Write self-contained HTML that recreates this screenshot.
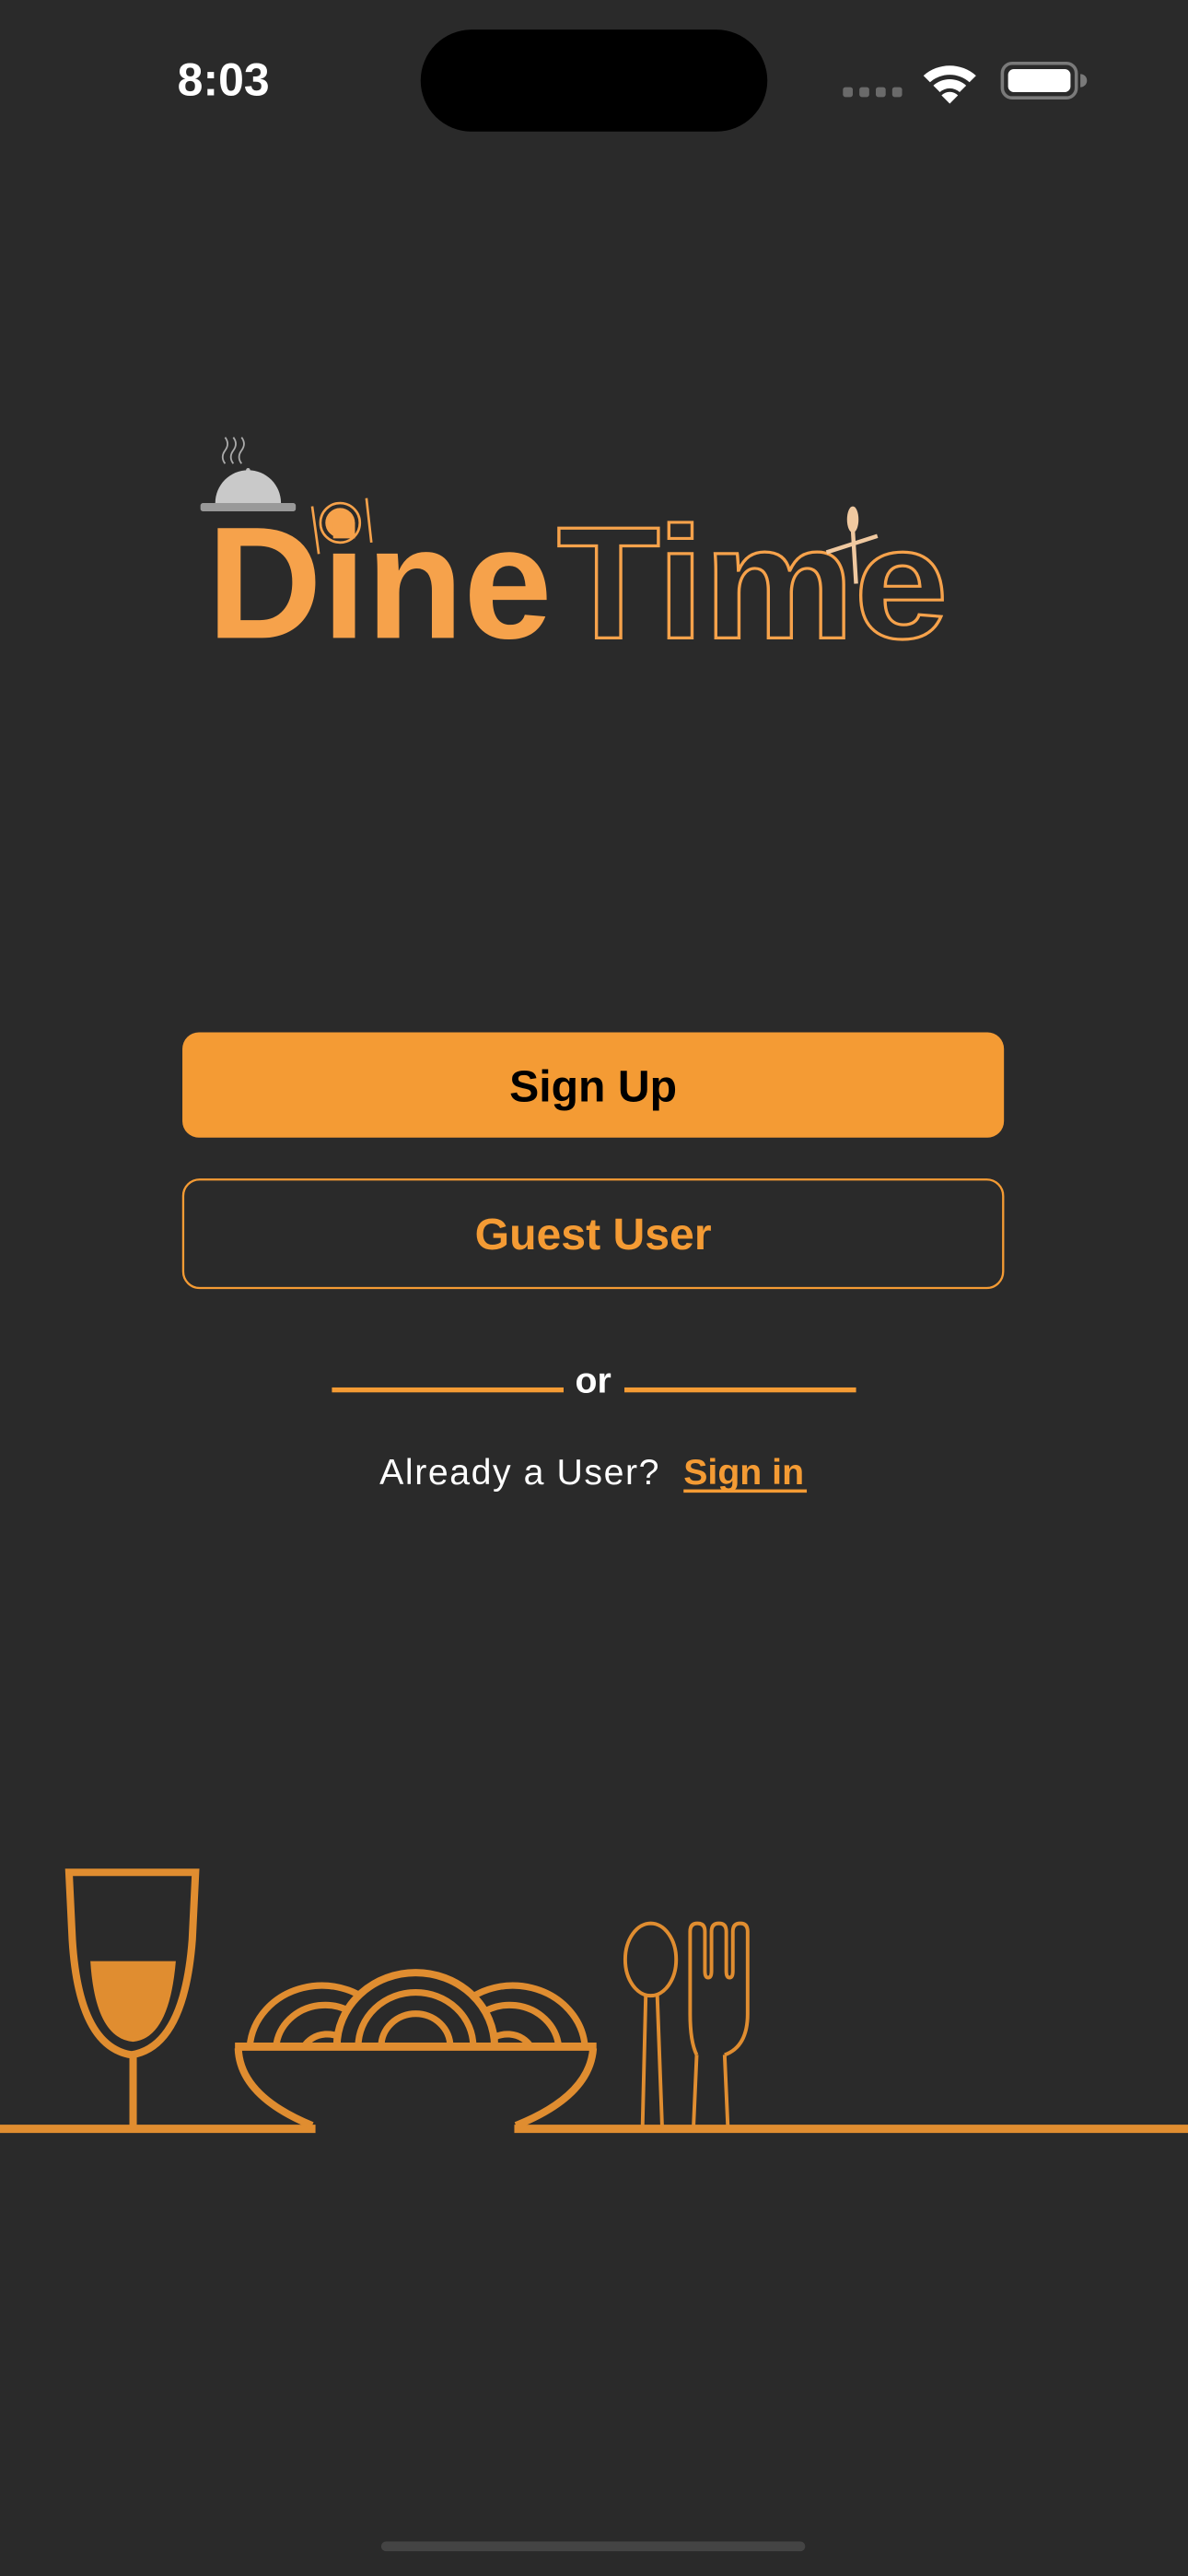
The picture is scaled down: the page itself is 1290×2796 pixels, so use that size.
<!DOCTYPE html>
<html><head><meta charset="utf-8"><style>
html,body{margin:0;padding:0;background:#2a2a2a;}
svg{display:block;}
</style></head><body>
<svg width="1290" height="2796" viewBox="0 0 723 1567" xmlns="http://www.w3.org/2000/svg" font-family="'Liberation Sans', sans-serif">
<rect width="723" height="1567" fill="#2a2a2a"/>
<!-- status bar -->
<text x="136" y="58" text-anchor="middle" font-size="28" font-weight="bold" fill="#fff">8:03</text>
<rect x="256" y="18" width="211" height="62" rx="31" fill="#000"/>
<g fill="#6a6a6a">
<rect x="513" y="53" width="6" height="6" rx="1.5"/><rect x="523" y="53" width="6" height="6" rx="1.5"/>
<rect x="533" y="53" width="6" height="6" rx="1.5"/><rect x="543" y="53" width="6" height="6" rx="1.5"/>
</g>
<g fill="#fff">
<path d="M562 46 A24 24 0 0 1 594 46 L590 50 A18 18 0 0 0 566 50 Z"/>
<path d="M568 52 A15 15 0 0 1 588 52 L584 56 A9 9 0 0 0 572 56 Z"/>
<path d="M573 58 A7 7 0 0 1 583 58 L578 63 Z"/>
</g>
<rect x="610" y="38.5" width="45" height="21" rx="6" fill="none" stroke="#7a7a7a" stroke-width="2"/>
<rect x="613.5" y="42" width="38" height="14" rx="3.5" fill="#fff"/>
<path d="M657.5 45 a3 3 0 0 1 0 8 Z" fill="#7a7a7a"/>

<!-- logo -->
<g>
<path d="M137 282 q-3 -4 0 -8 q3 -4 0 -8 M142 282 q-3 -4 0 -8 q3 -4 0 -8 M147 282 q-3 -4 0 -8 q3 -4 0 -8" stroke="#aaa" stroke-width="1" fill="none"/>
<circle cx="151" cy="286" r="1.3" fill="#bbb"/>
<path d="M131 306 A20 20 0 0 1 171 306 Z" fill="#c9c9c9"/>
<rect x="122" y="306" width="58" height="5" rx="1.5" fill="#999"/>
<circle cx="207" cy="318" r="12" fill="none" stroke="#f6a24b" stroke-width="1.5"/>
<circle cx="207" cy="318" r="9" fill="#f6a24b"/>
<path d="M190 308 L194 337 M223 303 L226 330" stroke="#f6a24b" stroke-width="1.5"/>
<text x="126" y="388" font-size="97" font-weight="bold" fill="#f6a24b" textLength="210" lengthAdjust="spacingAndGlyphs">Dine</text>
<text x="339" y="388" font-size="97" font-weight="bold" fill="none" stroke="#f6a24b" stroke-width="1.8" textLength="238" lengthAdjust="spacingAndGlyphs">Time</text>
<ellipse cx="519" cy="316" rx="3.5" ry="8" fill="#f0c9a0"/>
<path d="M519 322 L521 355 M503 336 L534 326" stroke="#f0c9a0" stroke-width="2.5"/>
</g>

<!-- buttons -->
<rect x="111" y="628" width="500" height="64" rx="10" fill="#f49b34"/>
<text x="361" y="670" text-anchor="middle" font-size="27" font-weight="bold" fill="#000">Sign Up</text>
<rect x="111.5" y="717.5" width="499" height="66" rx="10" fill="none" stroke="#f49b34" stroke-width="1.3"/>
<text x="361" y="760" text-anchor="middle" font-size="27" font-weight="bold" fill="#f49b34">Guest User</text>
<rect x="202" y="844" width="141" height="3" fill="#f49b34"/>
<rect x="380" y="844" width="141" height="3" fill="#f49b34"/>
<text x="361" y="847" text-anchor="middle" font-size="22" font-weight="bold" fill="#fff">or</text>
<text x="231" y="903" font-size="22" fill="#fff" textLength="170" lengthAdjust="spacing">Already a User?</text>
<text x="416" y="903" font-size="22" font-weight="bold" fill="#f49b34">Sign in</text>
<rect x="416" y="906" width="75" height="2" fill="#f49b34"/>

<!-- illustration -->
<g stroke="#e08d30" fill="none">
<path d="M0 1295 H192 M313 1295 H723" stroke-width="5"/>
<path d="M42 1139 H119 L117 1180 Q112 1245 80 1250 Q48 1245 44 1180 Z" stroke-width="4.5"/>
<path d="M55 1193 H107 Q103 1240 81 1242 Q58 1240 55 1193 Z" fill="#e08d30" stroke="none"/>
<path d="M81 1250 V1295" stroke-width="4.5"/>
<path d="M152 1245 A44 40 0 0 1 232 1225 M168 1245 A30 28 0 0 1 226 1238 M185 1245 A16 14 0 0 1 212 1243" stroke-width="4"/>
<path d="M356 1245 A44 40 0 0 0 276 1225 M340 1245 A30 28 0 0 0 282 1238 M323 1245 A16 14 0 0 0 296 1243" stroke-width="4"/>
<path d="M205 1245 A48 45 0 0 1 301 1245" stroke-width="4.5" fill="#2a2a2a"/>
<path d="M218 1245 A35 33 0 0 1 288 1245" stroke-width="4"/>
<path d="M232 1245 A21 20 0 0 1 274 1245" stroke-width="4"/>
<path d="M143 1245 H363" stroke-width="5"/>
<path d="M145 1246 Q146 1275 190 1293 M361 1246 Q359 1275 314 1293" stroke-width="4.5"/>
<ellipse cx="396" cy="1192" rx="15.5" ry="22" stroke-width="2.2"/>
<path d="M393 1214 L391 1295 M400 1214 L403 1295" stroke-width="2.2"/>
<path d="M424 1250 L422 1295 M441 1250 L443 1295" stroke-width="2.2"/>
<path d="M424 1250 Q420 1242 420 1225 V1175 Q420 1170 424.5 1170 Q429 1170 429 1175 V1199 Q429 1203 431 1203 Q433 1203 433 1199 V1175 Q433 1170 437.5 1170 Q442 1170 442 1175 V1199 Q442 1203 444 1203 Q446 1203 446 1199 V1175 Q446 1170 450.5 1170 Q455 1170 455 1175 V1225 Q455 1245 441 1250" stroke-width="2.2"/>
</g>
<rect x="232" y="1546" width="258" height="6" rx="3" fill="#444"/>
</svg>
</body></html>
